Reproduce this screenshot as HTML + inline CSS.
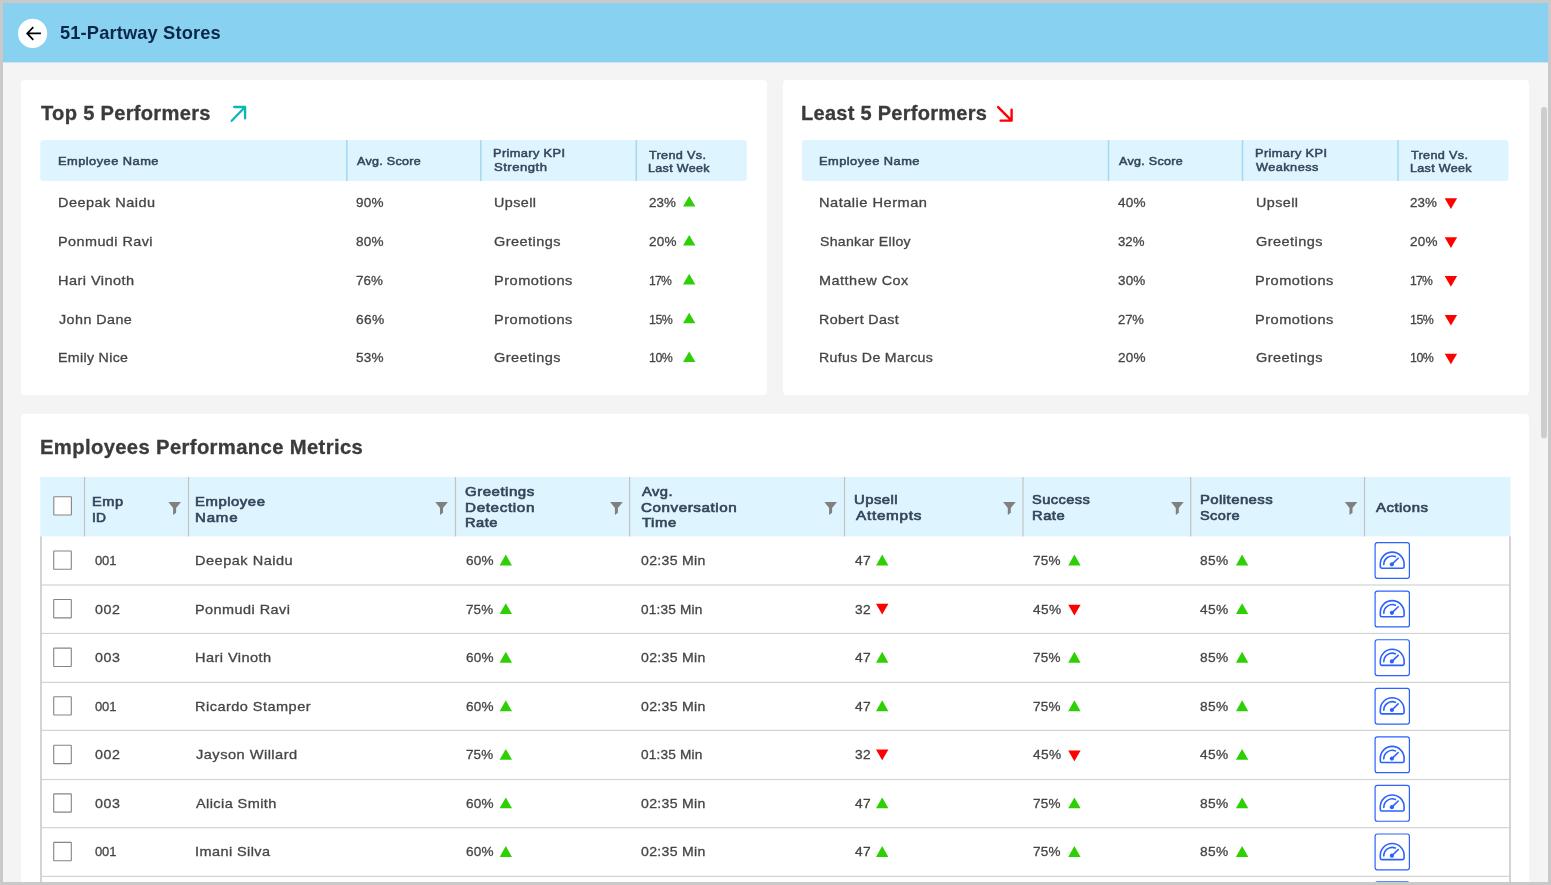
<!DOCTYPE html>
<html><head><meta charset="utf-8"><title>51-Partway Stores</title>
<style>
html,body{margin:0;padding:0}
body{width:1551px;height:885px;overflow:hidden;position:relative;background:#c9c9c9;font-family:'Liberation Sans',sans-serif}
#app{position:absolute;left:0;top:0;width:1551px;height:885px;overflow:hidden}
#clip{position:absolute;left:3px;top:3px;width:1545px;height:879px;overflow:hidden}
#inner{position:absolute;left:-3px;top:-3px;width:1551px;height:885px;will-change:transform}
.t{position:absolute;white-space:pre;line-height:20px;transform-origin:0 0}
</style></head><body>
<div id="app"><div id="clip"><div id="inner">
<svg id="shapes" width="1551" height="885" viewBox="0 0 1551 885" style="position:absolute;left:0;top:0">
<rect x="3.00" y="3.00" width="1545.00" height="879.00" fill="#f4f4f4"/>
<rect x="3.00" y="3.00" width="1545.00" height="59.40" fill="#89d1f1"/>
<circle cx="32.6" cy="33.4" r="14.6" fill="#fff"/>
<path d="M40.9 33.45H27.4M33.3 27.1L27.2 33.45L33.3 39.8" fill="none" stroke="#000" stroke-width="1.7" stroke-linejoin="miter"/>
<rect x="1541.00" y="107.00" width="6.00" height="331.40" rx="3" fill="#cdcdcd"/>
<rect x="21.00" y="80.00" width="746.00" height="315.00" rx="4" fill="#fff"/>
<rect x="783.00" y="80.00" width="746.00" height="315.00" rx="4" fill="#fff"/>
<rect x="21.00" y="414.00" width="1508.00" height="486.00" rx="4" fill="#fff"/>
<rect x="40.30" y="140.00" width="706.50" height="41.00" rx="3" fill="#def4fe"/>
<rect x="346.05" y="140.00" width="1.50" height="41.00" fill="#a6d8f3"/>
<rect x="480.05" y="140.00" width="1.50" height="41.00" fill="#a6d8f3"/>
<rect x="635.55" y="140.00" width="1.50" height="41.00" fill="#a6d8f3"/>
<polygon points="683.00,206.60 695.40,206.60 689.20,196.00" fill="#2ed005"/>
<polygon points="683.00,245.60 695.40,245.60 689.20,235.00" fill="#2ed005"/>
<polygon points="683.00,284.40 695.40,284.40 689.20,273.80" fill="#2ed005"/>
<polygon points="683.00,323.30 695.40,323.30 689.20,312.70" fill="#2ed005"/>
<polygon points="683.00,362.00 695.40,362.00 689.20,351.40" fill="#2ed005"/>
<rect x="802.00" y="140.00" width="706.50" height="41.00" rx="3" fill="#def4fe"/>
<rect x="1107.75" y="140.00" width="1.50" height="41.00" fill="#a6d8f3"/>
<rect x="1241.75" y="140.00" width="1.50" height="41.00" fill="#a6d8f3"/>
<rect x="1397.25" y="140.00" width="1.50" height="41.00" fill="#a6d8f3"/>
<polygon points="1444.70,198.30 1457.10,198.30 1450.90,208.90" fill="#ff0000"/>
<polygon points="1444.70,237.30 1457.10,237.30 1450.90,247.90" fill="#ff0000"/>
<polygon points="1444.70,276.10 1457.10,276.10 1450.90,286.70" fill="#ff0000"/>
<polygon points="1444.70,315.00 1457.10,315.00 1450.90,325.60" fill="#ff0000"/>
<polygon points="1444.70,353.70 1457.10,353.70 1450.90,364.30" fill="#ff0000"/>
<path d="M234.2 107H245.1V118.4M245.1 107L231.7 120.8" fill="none" stroke="#0bb8b4" stroke-width="2.3" stroke-linecap="round" stroke-linejoin="round"/>
<path d="M1011.6 109.6V120.6H1000.6M1011.6 120.6L998.1 107.1" fill="none" stroke="#ff0000" stroke-width="2.4" stroke-linecap="round" stroke-linejoin="round"/>
<rect x="40.30" y="477.00" width="1470.30" height="59.40" fill="#def4fe"/>
<rect x="83.90" y="477.00" width="1.20" height="59.40" fill="#c3c3c3"/>
<rect x="187.90" y="477.00" width="1.20" height="59.40" fill="#c3c3c3"/>
<rect x="454.90" y="477.00" width="1.20" height="59.40" fill="#c3c3c3"/>
<rect x="629.00" y="477.00" width="1.20" height="59.40" fill="#c3c3c3"/>
<rect x="843.90" y="477.00" width="1.20" height="59.40" fill="#c3c3c3"/>
<rect x="1022.40" y="477.00" width="1.20" height="59.40" fill="#c3c3c3"/>
<rect x="1190.10" y="477.00" width="1.20" height="59.40" fill="#c3c3c3"/>
<rect x="1363.90" y="477.00" width="1.20" height="59.40" fill="#c3c3c3"/>
<rect x="40.10" y="536.30" width="1.80" height="353.70" fill="#d0d0d0"/>
<rect x="1509.10" y="536.30" width="1.80" height="353.70" fill="#d0d0d0"/>
<rect x="53.80" y="496.80" width="17.60" height="18.20" rx="0.4" fill="#fff" stroke="#858585" stroke-width="1.1"/>
<polygon points="168.40,502.10 181.00,502.10 176.10,508.10 176.10,512.70 173.10,514.90 173.10,508.10" fill="#808080"/>
<polygon points="435.30,502.10 447.90,502.10 443.00,508.10 443.00,512.70 440.00,514.90 440.00,508.10" fill="#808080"/>
<polygon points="610.20,502.10 622.80,502.10 617.90,508.10 617.90,512.70 614.90,514.90 614.90,508.10" fill="#808080"/>
<polygon points="824.40,502.10 837.00,502.10 832.10,508.10 832.10,512.70 829.10,514.90 829.10,508.10" fill="#808080"/>
<polygon points="1003.10,502.10 1015.70,502.10 1010.80,508.10 1010.80,512.70 1007.80,514.90 1007.80,508.10" fill="#808080"/>
<polygon points="1171.10,502.10 1183.70,502.10 1178.80,508.10 1178.80,512.70 1175.80,514.90 1175.80,508.10" fill="#808080"/>
<polygon points="1344.80,502.10 1357.40,502.10 1352.50,508.10 1352.50,512.70 1349.50,514.90 1349.50,508.10" fill="#808080"/>
<rect x="41.00" y="584.40" width="1469.00" height="1.20" fill="#d3d3d3"/>
<rect x="53.70" y="551.00" width="17.60" height="18.30" rx="0.4" fill="#fff" stroke="#858585" stroke-width="1.1"/>
<polygon points="499.60,565.50 512.00,565.50 505.80,554.60" fill="#2ed005"/>
<polygon points="876.00,565.50 888.40,565.50 882.20,554.60" fill="#2ed005"/>
<polygon points="1068.20,565.50 1080.60,565.50 1074.40,554.60" fill="#2ed005"/>
<polygon points="1235.90,565.50 1248.30,565.50 1242.10,554.60" fill="#2ed005"/>
<rect x="1375.10" y="542.60" width="34.3" height="35.8" rx="2.3" fill="#fff" stroke="#2a62ff" stroke-width="1.2"/><path d="M1380.30 564.00a11.9 11.9 0 0 1 23.8 0v2.6a1.6 1.6 0 0 1 -1.6 1.6h-20.6a1.6 1.6 0 0 1 -1.6 -1.6z" fill="none" stroke="#2a62ff" stroke-width="1.6" stroke-linejoin="round"/><path d="M1383.80 564.60a8.5 8.5 0 0 1 11.6 -8.0" fill="none" stroke="#2a62ff" stroke-width="1.6" stroke-linecap="round"/><path d="M1391.90 564.30L1398.20 558.20" fill="none" stroke="#2a62ff" stroke-width="1.6" stroke-linecap="round"/><circle cx="1391.90" cy="564.30" r="2.1" fill="#2a62ff"/>
<rect x="41.00" y="632.85" width="1469.00" height="1.20" fill="#d3d3d3"/>
<rect x="53.70" y="599.57" width="17.60" height="18.30" rx="0.4" fill="#fff" stroke="#858585" stroke-width="1.1"/>
<polygon points="499.60,614.07 512.00,614.07 505.80,603.17" fill="#2ed005"/>
<polygon points="876.00,603.67 888.40,603.67 882.20,614.57" fill="#ff0000"/>
<polygon points="1068.20,604.67 1080.60,604.67 1074.40,615.57" fill="#ff0000"/>
<polygon points="1235.90,614.07 1248.30,614.07 1242.10,603.17" fill="#2ed005"/>
<rect x="1375.10" y="591.17" width="34.3" height="35.8" rx="2.3" fill="#fff" stroke="#2a62ff" stroke-width="1.2"/><path d="M1380.30 612.57a11.9 11.9 0 0 1 23.8 0v2.6a1.6 1.6 0 0 1 -1.6 1.6h-20.6a1.6 1.6 0 0 1 -1.6 -1.6z" fill="none" stroke="#2a62ff" stroke-width="1.6" stroke-linejoin="round"/><path d="M1383.80 613.17a8.5 8.5 0 0 1 11.6 -8.0" fill="none" stroke="#2a62ff" stroke-width="1.6" stroke-linecap="round"/><path d="M1391.90 612.87L1398.20 606.77" fill="none" stroke="#2a62ff" stroke-width="1.6" stroke-linecap="round"/><circle cx="1391.90" cy="612.87" r="2.1" fill="#2a62ff"/>
<rect x="41.00" y="681.80" width="1469.00" height="1.20" fill="#d3d3d3"/>
<rect x="53.70" y="648.14" width="17.60" height="18.30" rx="0.4" fill="#fff" stroke="#858585" stroke-width="1.1"/>
<polygon points="499.60,662.64 512.00,662.64 505.80,651.74" fill="#2ed005"/>
<polygon points="876.00,662.64 888.40,662.64 882.20,651.74" fill="#2ed005"/>
<polygon points="1068.20,662.64 1080.60,662.64 1074.40,651.74" fill="#2ed005"/>
<polygon points="1235.90,662.64 1248.30,662.64 1242.10,651.74" fill="#2ed005"/>
<rect x="1375.10" y="639.74" width="34.3" height="35.8" rx="2.3" fill="#fff" stroke="#2a62ff" stroke-width="1.2"/><path d="M1380.30 661.14a11.9 11.9 0 0 1 23.8 0v2.6a1.6 1.6 0 0 1 -1.6 1.6h-20.6a1.6 1.6 0 0 1 -1.6 -1.6z" fill="none" stroke="#2a62ff" stroke-width="1.6" stroke-linejoin="round"/><path d="M1383.80 661.74a8.5 8.5 0 0 1 11.6 -8.0" fill="none" stroke="#2a62ff" stroke-width="1.6" stroke-linecap="round"/><path d="M1391.90 661.44L1398.20 655.34" fill="none" stroke="#2a62ff" stroke-width="1.6" stroke-linecap="round"/><circle cx="1391.90" cy="661.44" r="2.1" fill="#2a62ff"/>
<rect x="41.00" y="729.80" width="1469.00" height="1.20" fill="#d3d3d3"/>
<rect x="53.70" y="696.71" width="17.60" height="18.30" rx="0.4" fill="#fff" stroke="#858585" stroke-width="1.1"/>
<polygon points="499.60,711.21 512.00,711.21 505.80,700.31" fill="#2ed005"/>
<polygon points="876.00,711.21 888.40,711.21 882.20,700.31" fill="#2ed005"/>
<polygon points="1068.20,711.21 1080.60,711.21 1074.40,700.31" fill="#2ed005"/>
<polygon points="1235.90,711.21 1248.30,711.21 1242.10,700.31" fill="#2ed005"/>
<rect x="1375.10" y="688.31" width="34.3" height="35.8" rx="2.3" fill="#fff" stroke="#2a62ff" stroke-width="1.2"/><path d="M1380.30 709.71a11.9 11.9 0 0 1 23.8 0v2.6a1.6 1.6 0 0 1 -1.6 1.6h-20.6a1.6 1.6 0 0 1 -1.6 -1.6z" fill="none" stroke="#2a62ff" stroke-width="1.6" stroke-linejoin="round"/><path d="M1383.80 710.31a8.5 8.5 0 0 1 11.6 -8.0" fill="none" stroke="#2a62ff" stroke-width="1.6" stroke-linecap="round"/><path d="M1391.90 710.01L1398.20 703.91" fill="none" stroke="#2a62ff" stroke-width="1.6" stroke-linecap="round"/><circle cx="1391.90" cy="710.01" r="2.1" fill="#2a62ff"/>
<rect x="41.00" y="778.90" width="1469.00" height="1.20" fill="#d3d3d3"/>
<rect x="53.70" y="745.28" width="17.60" height="18.30" rx="0.4" fill="#fff" stroke="#858585" stroke-width="1.1"/>
<polygon points="499.60,759.78 512.00,759.78 505.80,748.88" fill="#2ed005"/>
<polygon points="876.00,749.38 888.40,749.38 882.20,760.28" fill="#ff0000"/>
<polygon points="1068.20,750.38 1080.60,750.38 1074.40,761.28" fill="#ff0000"/>
<polygon points="1235.90,759.78 1248.30,759.78 1242.10,748.88" fill="#2ed005"/>
<rect x="1375.10" y="736.88" width="34.3" height="35.8" rx="2.3" fill="#fff" stroke="#2a62ff" stroke-width="1.2"/><path d="M1380.30 758.28a11.9 11.9 0 0 1 23.8 0v2.6a1.6 1.6 0 0 1 -1.6 1.6h-20.6a1.6 1.6 0 0 1 -1.6 -1.6z" fill="none" stroke="#2a62ff" stroke-width="1.6" stroke-linejoin="round"/><path d="M1383.80 758.88a8.5 8.5 0 0 1 11.6 -8.0" fill="none" stroke="#2a62ff" stroke-width="1.6" stroke-linecap="round"/><path d="M1391.90 758.58L1398.20 752.48" fill="none" stroke="#2a62ff" stroke-width="1.6" stroke-linecap="round"/><circle cx="1391.90" cy="758.58" r="2.1" fill="#2a62ff"/>
<rect x="41.00" y="827.05" width="1469.00" height="1.20" fill="#d3d3d3"/>
<rect x="53.70" y="793.85" width="17.60" height="18.30" rx="0.4" fill="#fff" stroke="#858585" stroke-width="1.1"/>
<polygon points="499.60,808.35 512.00,808.35 505.80,797.45" fill="#2ed005"/>
<polygon points="876.00,808.35 888.40,808.35 882.20,797.45" fill="#2ed005"/>
<polygon points="1068.20,808.35 1080.60,808.35 1074.40,797.45" fill="#2ed005"/>
<polygon points="1235.90,808.35 1248.30,808.35 1242.10,797.45" fill="#2ed005"/>
<rect x="1375.10" y="785.45" width="34.3" height="35.8" rx="2.3" fill="#fff" stroke="#2a62ff" stroke-width="1.2"/><path d="M1380.30 806.85a11.9 11.9 0 0 1 23.8 0v2.6a1.6 1.6 0 0 1 -1.6 1.6h-20.6a1.6 1.6 0 0 1 -1.6 -1.6z" fill="none" stroke="#2a62ff" stroke-width="1.6" stroke-linejoin="round"/><path d="M1383.80 807.45a8.5 8.5 0 0 1 11.6 -8.0" fill="none" stroke="#2a62ff" stroke-width="1.6" stroke-linecap="round"/><path d="M1391.90 807.15L1398.20 801.05" fill="none" stroke="#2a62ff" stroke-width="1.6" stroke-linecap="round"/><circle cx="1391.90" cy="807.15" r="2.1" fill="#2a62ff"/>
<rect x="41.00" y="875.80" width="1469.00" height="1.20" fill="#d3d3d3"/>
<rect x="53.70" y="842.42" width="17.60" height="18.30" rx="0.4" fill="#fff" stroke="#858585" stroke-width="1.1"/>
<polygon points="499.60,856.92 512.00,856.92 505.80,846.02" fill="#2ed005"/>
<polygon points="876.00,856.92 888.40,856.92 882.20,846.02" fill="#2ed005"/>
<polygon points="1068.20,856.92 1080.60,856.92 1074.40,846.02" fill="#2ed005"/>
<polygon points="1235.90,856.92 1248.30,856.92 1242.10,846.02" fill="#2ed005"/>
<rect x="1375.10" y="834.02" width="34.3" height="35.8" rx="2.3" fill="#fff" stroke="#2a62ff" stroke-width="1.2"/><path d="M1380.30 855.42a11.9 11.9 0 0 1 23.8 0v2.6a1.6 1.6 0 0 1 -1.6 1.6h-20.6a1.6 1.6 0 0 1 -1.6 -1.6z" fill="none" stroke="#2a62ff" stroke-width="1.6" stroke-linejoin="round"/><path d="M1383.80 856.02a8.5 8.5 0 0 1 11.6 -8.0" fill="none" stroke="#2a62ff" stroke-width="1.6" stroke-linecap="round"/><path d="M1391.90 855.72L1398.20 849.62" fill="none" stroke="#2a62ff" stroke-width="1.6" stroke-linecap="round"/><circle cx="1391.90" cy="855.72" r="2.1" fill="#2a62ff"/>
<rect x="41.00" y="924.40" width="1469.00" height="1.20" fill="#d3d3d3"/>
<rect x="53.70" y="890.99" width="17.60" height="18.30" rx="0.4" fill="#fff" stroke="#858585" stroke-width="1.1"/>
<polygon points="499.60,905.49 512.00,905.49 505.80,894.59" fill="#2ed005"/>
<polygon points="876.00,895.09 888.40,895.09 882.20,905.99" fill="#ff0000"/>
<polygon points="1068.20,896.09 1080.60,896.09 1074.40,906.99" fill="#ff0000"/>
<polygon points="1235.90,905.49 1248.30,905.49 1242.10,894.59" fill="#2ed005"/>
<rect x="1375.10" y="881.89" width="34.3" height="35.8" rx="2.3" fill="#fff" stroke="#2a62ff" stroke-width="1.2"/><path d="M1380.30 903.29a11.9 11.9 0 0 1 23.8 0v2.6a1.6 1.6 0 0 1 -1.6 1.6h-20.6a1.6 1.6 0 0 1 -1.6 -1.6z" fill="none" stroke="#2a62ff" stroke-width="1.6" stroke-linejoin="round"/><path d="M1383.80 903.89a8.5 8.5 0 0 1 11.6 -8.0" fill="none" stroke="#2a62ff" stroke-width="1.6" stroke-linecap="round"/><path d="M1391.90 903.59L1398.20 897.49" fill="none" stroke="#2a62ff" stroke-width="1.6" stroke-linecap="round"/><circle cx="1391.90" cy="903.59" r="2.1" fill="#2a62ff"/>
</svg>
<div class="t" style="left:59.59px;top:23.40px;font-size:17.9px;font-weight:700;color:#0a2748;letter-spacing:0.135px;transform:scaleX(1.0214)">51-Partway Stores</div>
<div class="t" style="left:40.80px;top:103.60px;font-size:19.3px;font-weight:700;color:#3b3b3b;letter-spacing:0.286px;transform:scaleX(1.0427);-webkit-text-stroke:0.3px">Top 5 Performers</div>
<div class="t" style="left:57.58px;top:151.40px;font-size:11.7px;font-weight:400;color:#33455b;letter-spacing:0.425px;transform:scaleX(1.0982);-webkit-text-stroke:0.5px">Employee Name</div>
<div class="t" style="left:356.87px;top:151.40px;font-size:11.7px;font-weight:400;color:#33455b;letter-spacing:0.282px;transform:scaleX(1.0716);-webkit-text-stroke:0.5px">Avg. Score</div>
<div class="t" style="left:492.98px;top:143.40px;font-size:11.7px;font-weight:400;color:#33455b;letter-spacing:0.346px;transform:scaleX(1.0933);-webkit-text-stroke:0.5px">Primary KPI</div>
<div class="t" style="left:493.52px;top:156.90px;font-size:11.7px;font-weight:400;color:#33455b;letter-spacing:0.444px;transform:scaleX(1.1200);-webkit-text-stroke:0.5px">Strength</div>
<div class="t" style="left:649.10px;top:144.80px;font-size:11.7px;font-weight:400;color:#33455b;letter-spacing:0.306px;transform:scaleX(1.0800);-webkit-text-stroke:0.5px">Trend Vs.</div>
<div class="t" style="left:648.30px;top:158.40px;font-size:11.7px;font-weight:400;color:#33455b;letter-spacing:0.306px;transform:scaleX(1.0718);-webkit-text-stroke:0.5px">Last Week</div>
<div class="t" style="left:57.50px;top:193.00px;font-size:13.2px;font-weight:400;color:#454545;letter-spacing:0.439px;transform:scaleX(1.0972);-webkit-text-stroke:0.3px">Deepak Naidu</div>
<div class="t" style="left:355.99px;top:193.00px;font-size:13.2px;font-weight:400;color:#454545;letter-spacing:0.214px;transform:scaleX(1.0259);-webkit-text-stroke:0.3px">90%</div>
<div class="t" style="left:494.08px;top:193.00px;font-size:13.2px;font-weight:400;color:#454545;letter-spacing:0.379px;transform:scaleX(1.0877);-webkit-text-stroke:0.3px">Upsell</div>
<div class="t" style="left:648.69px;top:193.00px;font-size:13.2px;font-weight:400;color:#454545;letter-spacing:0.118px;transform:scaleX(1.0141);-webkit-text-stroke:0.3px">23%</div>
<div class="t" style="left:57.51px;top:232.00px;font-size:13.2px;font-weight:400;color:#454545;letter-spacing:0.410px;transform:scaleX(1.0917);-webkit-text-stroke:0.3px">Ponmudi Ravi</div>
<div class="t" style="left:355.99px;top:232.00px;font-size:13.2px;font-weight:400;color:#454545;letter-spacing:0.214px;transform:scaleX(1.0259);-webkit-text-stroke:0.3px">80%</div>
<div class="t" style="left:494.35px;top:232.00px;font-size:13.2px;font-weight:400;color:#454545;letter-spacing:0.421px;transform:scaleX(1.0987);-webkit-text-stroke:0.3px">Greetings</div>
<div class="t" style="left:648.69px;top:232.00px;font-size:13.2px;font-weight:400;color:#454545;letter-spacing:0.195px;transform:scaleX(1.0235);-webkit-text-stroke:0.3px">20%</div>
<div class="t" style="left:57.50px;top:270.80px;font-size:13.2px;font-weight:400;color:#454545;letter-spacing:0.393px;transform:scaleX(1.1029);-webkit-text-stroke:0.3px">Hari Vinoth</div>
<div class="t" style="left:355.99px;top:270.80px;font-size:13.2px;font-weight:400;color:#454545;letter-spacing:0.099px;transform:scaleX(1.0118);-webkit-text-stroke:0.3px">76%</div>
<div class="t" style="left:493.79px;top:270.80px;font-size:13.2px;font-weight:400;color:#454545;letter-spacing:0.462px;transform:scaleX(1.1053);-webkit-text-stroke:0.3px">Promotions</div>
<div class="t" style="left:648.51px;top:270.80px;font-size:13.2px;font-weight:400;color:#454545;letter-spacing:-0.832px;transform:scaleX(0.9200);-webkit-text-stroke:0.3px">17%</div>
<div class="t" style="left:58.60px;top:309.70px;font-size:13.2px;font-weight:400;color:#454545;letter-spacing:0.412px;transform:scaleX(1.0849);-webkit-text-stroke:0.3px">John Dane</div>
<div class="t" style="left:355.98px;top:309.70px;font-size:13.2px;font-weight:400;color:#454545;letter-spacing:0.364px;transform:scaleX(1.0447);-webkit-text-stroke:0.3px">66%</div>
<div class="t" style="left:493.79px;top:309.70px;font-size:13.2px;font-weight:400;color:#454545;letter-spacing:0.462px;transform:scaleX(1.1053);-webkit-text-stroke:0.3px">Promotions</div>
<div class="t" style="left:648.50px;top:309.70px;font-size:13.2px;font-weight:400;color:#454545;letter-spacing:-0.543px;transform:scaleX(0.9394);-webkit-text-stroke:0.3px">15%</div>
<div class="t" style="left:57.53px;top:348.40px;font-size:13.2px;font-weight:400;color:#454545;letter-spacing:0.312px;transform:scaleX(1.0746);-webkit-text-stroke:0.3px">Emily Nice</div>
<div class="t" style="left:355.99px;top:348.40px;font-size:13.2px;font-weight:400;color:#454545;letter-spacing:0.233px;transform:scaleX(1.0282);-webkit-text-stroke:0.3px">53%</div>
<div class="t" style="left:494.35px;top:348.40px;font-size:13.2px;font-weight:400;color:#454545;letter-spacing:0.421px;transform:scaleX(1.0987);-webkit-text-stroke:0.3px">Greetings</div>
<div class="t" style="left:648.50px;top:348.40px;font-size:13.2px;font-weight:400;color:#454545;letter-spacing:-0.543px;transform:scaleX(0.9394);-webkit-text-stroke:0.3px">10%</div>
<div class="t" style="left:801.46px;top:103.60px;font-size:19.3px;font-weight:700;color:#3b3b3b;letter-spacing:0.251px;transform:scaleX(1.0385);-webkit-text-stroke:0.3px">Least 5 Performers</div>
<div class="t" style="left:819.28px;top:151.40px;font-size:11.7px;font-weight:400;color:#33455b;letter-spacing:0.425px;transform:scaleX(1.0982);-webkit-text-stroke:0.5px">Employee Name</div>
<div class="t" style="left:1118.57px;top:151.40px;font-size:11.7px;font-weight:400;color:#33455b;letter-spacing:0.282px;transform:scaleX(1.0716);-webkit-text-stroke:0.5px">Avg. Score</div>
<div class="t" style="left:1254.68px;top:143.40px;font-size:11.7px;font-weight:400;color:#33455b;letter-spacing:0.346px;transform:scaleX(1.0933);-webkit-text-stroke:0.5px">Primary KPI</div>
<div class="t" style="left:1255.77px;top:156.90px;font-size:11.7px;font-weight:400;color:#33455b;letter-spacing:0.420px;transform:scaleX(1.0881);-webkit-text-stroke:0.5px">Weakness</div>
<div class="t" style="left:1410.80px;top:144.80px;font-size:11.7px;font-weight:400;color:#33455b;letter-spacing:0.306px;transform:scaleX(1.0800);-webkit-text-stroke:0.5px">Trend Vs.</div>
<div class="t" style="left:1410.00px;top:158.40px;font-size:11.7px;font-weight:400;color:#33455b;letter-spacing:0.306px;transform:scaleX(1.0718);-webkit-text-stroke:0.5px">Last Week</div>
<div class="t" style="left:819.19px;top:193.00px;font-size:13.2px;font-weight:400;color:#454545;letter-spacing:0.450px;transform:scaleX(1.1080);-webkit-text-stroke:0.3px">Natalie Herman</div>
<div class="t" style="left:1117.94px;top:193.00px;font-size:13.2px;font-weight:400;color:#454545;letter-spacing:0.243px;transform:scaleX(1.0291);-webkit-text-stroke:0.3px">40%</div>
<div class="t" style="left:1255.78px;top:193.00px;font-size:13.2px;font-weight:400;color:#454545;letter-spacing:0.379px;transform:scaleX(1.0877);-webkit-text-stroke:0.3px">Upsell</div>
<div class="t" style="left:1410.39px;top:193.00px;font-size:13.2px;font-weight:400;color:#454545;letter-spacing:0.118px;transform:scaleX(1.0141);-webkit-text-stroke:0.3px">23%</div>
<div class="t" style="left:819.77px;top:232.00px;font-size:13.2px;font-weight:400;color:#454545;letter-spacing:0.287px;transform:scaleX(1.0681);-webkit-text-stroke:0.3px">Shankar Elloy</div>
<div class="t" style="left:1117.95px;top:232.00px;font-size:13.2px;font-weight:400;color:#454545;letter-spacing:0.010px;transform:scaleX(1.0012);-webkit-text-stroke:0.3px">32%</div>
<div class="t" style="left:1256.05px;top:232.00px;font-size:13.2px;font-weight:400;color:#454545;letter-spacing:0.421px;transform:scaleX(1.0987);-webkit-text-stroke:0.3px">Greetings</div>
<div class="t" style="left:1410.39px;top:232.00px;font-size:13.2px;font-weight:400;color:#454545;letter-spacing:0.195px;transform:scaleX(1.0235);-webkit-text-stroke:0.3px">20%</div>
<div class="t" style="left:819.20px;top:270.80px;font-size:13.2px;font-weight:400;color:#454545;letter-spacing:0.448px;transform:scaleX(1.0971);-webkit-text-stroke:0.3px">Matthew Cox</div>
<div class="t" style="left:1117.94px;top:270.80px;font-size:13.2px;font-weight:400;color:#454545;letter-spacing:0.186px;transform:scaleX(1.0221);-webkit-text-stroke:0.3px">30%</div>
<div class="t" style="left:1255.49px;top:270.80px;font-size:13.2px;font-weight:400;color:#454545;letter-spacing:0.462px;transform:scaleX(1.1053);-webkit-text-stroke:0.3px">Promotions</div>
<div class="t" style="left:1410.21px;top:270.80px;font-size:13.2px;font-weight:400;color:#454545;letter-spacing:-0.832px;transform:scaleX(0.9200);-webkit-text-stroke:0.3px">17%</div>
<div class="t" style="left:819.22px;top:309.70px;font-size:13.2px;font-weight:400;color:#454545;letter-spacing:0.344px;transform:scaleX(1.0803);-webkit-text-stroke:0.3px">Robert Dast</div>
<div class="t" style="left:1117.71px;top:309.70px;font-size:13.2px;font-weight:400;color:#454545;letter-spacing:-0.101px;transform:scaleX(0.9882);-webkit-text-stroke:0.3px">27%</div>
<div class="t" style="left:1255.49px;top:309.70px;font-size:13.2px;font-weight:400;color:#454545;letter-spacing:0.462px;transform:scaleX(1.1053);-webkit-text-stroke:0.3px">Promotions</div>
<div class="t" style="left:1410.20px;top:309.70px;font-size:13.2px;font-weight:400;color:#454545;letter-spacing:-0.543px;transform:scaleX(0.9394);-webkit-text-stroke:0.3px">15%</div>
<div class="t" style="left:819.23px;top:348.40px;font-size:13.2px;font-weight:400;color:#454545;letter-spacing:0.317px;transform:scaleX(1.0710);-webkit-text-stroke:0.3px">Rufus De Marcus</div>
<div class="t" style="left:1117.69px;top:348.40px;font-size:13.2px;font-weight:400;color:#454545;letter-spacing:0.233px;transform:scaleX(1.0282);-webkit-text-stroke:0.3px">20%</div>
<div class="t" style="left:1256.05px;top:348.40px;font-size:13.2px;font-weight:400;color:#454545;letter-spacing:0.421px;transform:scaleX(1.0987);-webkit-text-stroke:0.3px">Greetings</div>
<div class="t" style="left:1410.20px;top:348.40px;font-size:13.2px;font-weight:400;color:#454545;letter-spacing:-0.543px;transform:scaleX(0.9394);-webkit-text-stroke:0.3px">10%</div>
<div class="t" style="left:40.25px;top:437.90px;font-size:19.3px;font-weight:700;color:#3b3b3b;letter-spacing:0.337px;transform:scaleX(1.0501);-webkit-text-stroke:0.3px">Employees Performance Metrics</div>
<div class="t" style="left:91.90px;top:491.90px;font-size:13.6px;font-weight:400;color:#33455b;letter-spacing:0.580px;transform:scaleX(1.0689);-webkit-text-stroke:0.65px">Emp</div>
<div class="t" style="left:91.69px;top:507.50px;font-size:13.6px;font-weight:400;color:#33455b;letter-spacing:0.099px;transform:scaleX(1.0122);-webkit-text-stroke:0.65px">ID</div>
<div class="t" style="left:195.38px;top:492.00px;font-size:13.6px;font-weight:400;color:#33455b;letter-spacing:0.491px;transform:scaleX(1.0948);-webkit-text-stroke:0.65px">Employee</div>
<div class="t" style="left:195.37px;top:507.50px;font-size:13.6px;font-weight:400;color:#33455b;letter-spacing:0.742px;transform:scaleX(1.1047);-webkit-text-stroke:0.65px">Name</div>
<div class="t" style="left:465.42px;top:482.10px;font-size:13.6px;font-weight:400;color:#33455b;letter-spacing:0.462px;transform:scaleX(1.1046);-webkit-text-stroke:0.65px">Greetings</div>
<div class="t" style="left:464.86px;top:497.60px;font-size:13.6px;font-weight:400;color:#33455b;letter-spacing:0.569px;transform:scaleX(1.1200);-webkit-text-stroke:0.65px">Detection</div>
<div class="t" style="left:464.89px;top:513.10px;font-size:13.6px;font-weight:400;color:#33455b;letter-spacing:0.462px;transform:scaleX(1.0811);-webkit-text-stroke:0.65px">Rate</div>
<div class="t" style="left:642.24px;top:482.10px;font-size:13.6px;font-weight:400;color:#33455b;letter-spacing:0.432px;transform:scaleX(1.0792);-webkit-text-stroke:0.65px">Avg.</div>
<div class="t" style="left:641.42px;top:497.60px;font-size:13.6px;font-weight:400;color:#33455b;letter-spacing:0.506px;transform:scaleX(1.1177);-webkit-text-stroke:0.65px">Conversation</div>
<div class="t" style="left:641.70px;top:513.10px;font-size:13.6px;font-weight:400;color:#33455b;letter-spacing:0.538px;transform:scaleX(1.0895);-webkit-text-stroke:0.65px">Time</div>
<div class="t" style="left:854.28px;top:490.20px;font-size:13.6px;font-weight:400;color:#33455b;letter-spacing:0.417px;transform:scaleX(1.0937);-webkit-text-stroke:0.65px">Upsell</div>
<div class="t" style="left:855.66px;top:505.70px;font-size:13.6px;font-weight:400;color:#33455b;letter-spacing:0.679px;transform:scaleX(1.1200);-webkit-text-stroke:0.65px">Attempts</div>
<div class="t" style="left:1032.33px;top:490.20px;font-size:13.6px;font-weight:400;color:#33455b;letter-spacing:0.391px;transform:scaleX(1.0741);-webkit-text-stroke:0.65px">Success</div>
<div class="t" style="left:1031.79px;top:505.70px;font-size:13.6px;font-weight:400;color:#33455b;letter-spacing:0.474px;transform:scaleX(1.0832);-webkit-text-stroke:0.65px">Rate</div>
<div class="t" style="left:1199.68px;top:490.20px;font-size:13.6px;font-weight:400;color:#33455b;letter-spacing:0.400px;transform:scaleX(1.0957);-webkit-text-stroke:0.65px">Politeness</div>
<div class="t" style="left:1200.23px;top:505.70px;font-size:13.6px;font-weight:400;color:#33455b;letter-spacing:0.383px;transform:scaleX(1.0703);-webkit-text-stroke:0.65px">Score</div>
<div class="t" style="left:1375.75px;top:497.60px;font-size:13.6px;font-weight:400;color:#33455b;letter-spacing:0.449px;transform:scaleX(1.0987);-webkit-text-stroke:0.65px">Actions</div>
<div class="t" style="left:95.35px;top:551.00px;font-size:13.2px;font-weight:400;color:#454545;letter-spacing:-0.112px;transform:scaleX(0.9845);-webkit-text-stroke:0.3px">001</div>
<div class="t" style="left:195.10px;top:551.00px;font-size:13.2px;font-weight:400;color:#454545;letter-spacing:0.457px;transform:scaleX(1.1017);-webkit-text-stroke:0.3px">Deepak Naidu</div>
<div class="t" style="left:465.59px;top:551.00px;font-size:13.2px;font-weight:400;color:#454545;letter-spacing:0.233px;transform:scaleX(1.0282);-webkit-text-stroke:0.3px">60%</div>
<div class="t" style="left:641.43px;top:551.00px;font-size:13.2px;font-weight:400;color:#454545;letter-spacing:0.295px;transform:scaleX(1.0663);-webkit-text-stroke:0.3px">02:35 Min</div>
<div class="t" style="left:854.84px;top:551.00px;font-size:13.2px;font-weight:400;color:#454545;letter-spacing:0.420px;transform:scaleX(1.0471);-webkit-text-stroke:0.3px">47</div>
<div class="t" style="left:1032.79px;top:551.00px;font-size:13.2px;font-weight:400;color:#454545;letter-spacing:0.195px;transform:scaleX(1.0235);-webkit-text-stroke:0.3px">75%</div>
<div class="t" style="left:1199.88px;top:551.00px;font-size:13.2px;font-weight:400;color:#454545;letter-spacing:0.327px;transform:scaleX(1.0400);-webkit-text-stroke:0.3px">85%</div>
<div class="t" style="left:95.33px;top:599.57px;font-size:13.2px;font-weight:400;color:#454545;letter-spacing:0.545px;transform:scaleX(1.0833);-webkit-text-stroke:0.3px">002</div>
<div class="t" style="left:195.11px;top:599.57px;font-size:13.2px;font-weight:400;color:#454545;letter-spacing:0.422px;transform:scaleX(1.0947);-webkit-text-stroke:0.3px">Ponmudi Ravi</div>
<div class="t" style="left:465.59px;top:599.57px;font-size:13.2px;font-weight:400;color:#454545;letter-spacing:0.138px;transform:scaleX(1.0165);-webkit-text-stroke:0.3px">75%</div>
<div class="t" style="left:641.44px;top:599.57px;font-size:13.2px;font-weight:400;color:#454545;letter-spacing:0.159px;transform:scaleX(1.0347);-webkit-text-stroke:0.3px">01:35 Min</div>
<div class="t" style="left:854.84px;top:599.57px;font-size:13.2px;font-weight:400;color:#454545;letter-spacing:0.384px;transform:scaleX(1.0429);-webkit-text-stroke:0.3px">32</div>
<div class="t" style="left:1033.04px;top:599.57px;font-size:13.2px;font-weight:400;color:#454545;letter-spacing:0.318px;transform:scaleX(1.0384);-webkit-text-stroke:0.3px">45%</div>
<div class="t" style="left:1200.14px;top:599.57px;font-size:13.2px;font-weight:400;color:#454545;letter-spacing:0.336px;transform:scaleX(1.0408);-webkit-text-stroke:0.3px">45%</div>
<div class="t" style="left:95.33px;top:648.14px;font-size:13.2px;font-weight:400;color:#454545;letter-spacing:0.545px;transform:scaleX(1.0833);-webkit-text-stroke:0.3px">003</div>
<div class="t" style="left:195.10px;top:648.14px;font-size:13.2px;font-weight:400;color:#454545;letter-spacing:0.397px;transform:scaleX(1.1039);-webkit-text-stroke:0.3px">Hari Vinoth</div>
<div class="t" style="left:465.59px;top:648.14px;font-size:13.2px;font-weight:400;color:#454545;letter-spacing:0.233px;transform:scaleX(1.0282);-webkit-text-stroke:0.3px">60%</div>
<div class="t" style="left:641.43px;top:648.14px;font-size:13.2px;font-weight:400;color:#454545;letter-spacing:0.295px;transform:scaleX(1.0663);-webkit-text-stroke:0.3px">02:35 Min</div>
<div class="t" style="left:854.84px;top:648.14px;font-size:13.2px;font-weight:400;color:#454545;letter-spacing:0.420px;transform:scaleX(1.0471);-webkit-text-stroke:0.3px">47</div>
<div class="t" style="left:1032.79px;top:648.14px;font-size:13.2px;font-weight:400;color:#454545;letter-spacing:0.195px;transform:scaleX(1.0235);-webkit-text-stroke:0.3px">75%</div>
<div class="t" style="left:1199.88px;top:648.14px;font-size:13.2px;font-weight:400;color:#454545;letter-spacing:0.327px;transform:scaleX(1.0400);-webkit-text-stroke:0.3px">85%</div>
<div class="t" style="left:95.35px;top:696.71px;font-size:13.2px;font-weight:400;color:#454545;letter-spacing:-0.112px;transform:scaleX(0.9845);-webkit-text-stroke:0.3px">001</div>
<div class="t" style="left:195.10px;top:696.71px;font-size:13.2px;font-weight:400;color:#454545;letter-spacing:0.428px;transform:scaleX(1.1010);-webkit-text-stroke:0.3px">Ricardo Stamper</div>
<div class="t" style="left:465.59px;top:696.71px;font-size:13.2px;font-weight:400;color:#454545;letter-spacing:0.233px;transform:scaleX(1.0282);-webkit-text-stroke:0.3px">60%</div>
<div class="t" style="left:641.43px;top:696.71px;font-size:13.2px;font-weight:400;color:#454545;letter-spacing:0.295px;transform:scaleX(1.0663);-webkit-text-stroke:0.3px">02:35 Min</div>
<div class="t" style="left:854.84px;top:696.71px;font-size:13.2px;font-weight:400;color:#454545;letter-spacing:0.420px;transform:scaleX(1.0471);-webkit-text-stroke:0.3px">47</div>
<div class="t" style="left:1032.79px;top:696.71px;font-size:13.2px;font-weight:400;color:#454545;letter-spacing:0.195px;transform:scaleX(1.0235);-webkit-text-stroke:0.3px">75%</div>
<div class="t" style="left:1199.88px;top:696.71px;font-size:13.2px;font-weight:400;color:#454545;letter-spacing:0.327px;transform:scaleX(1.0400);-webkit-text-stroke:0.3px">85%</div>
<div class="t" style="left:95.33px;top:745.28px;font-size:13.2px;font-weight:400;color:#454545;letter-spacing:0.545px;transform:scaleX(1.0833);-webkit-text-stroke:0.3px">002</div>
<div class="t" style="left:195.60px;top:745.28px;font-size:13.2px;font-weight:400;color:#454545;letter-spacing:0.425px;transform:scaleX(1.1080);-webkit-text-stroke:0.3px">Jayson Willard</div>
<div class="t" style="left:465.59px;top:745.28px;font-size:13.2px;font-weight:400;color:#454545;letter-spacing:0.138px;transform:scaleX(1.0165);-webkit-text-stroke:0.3px">75%</div>
<div class="t" style="left:641.44px;top:745.28px;font-size:13.2px;font-weight:400;color:#454545;letter-spacing:0.159px;transform:scaleX(1.0347);-webkit-text-stroke:0.3px">01:35 Min</div>
<div class="t" style="left:854.84px;top:745.28px;font-size:13.2px;font-weight:400;color:#454545;letter-spacing:0.384px;transform:scaleX(1.0429);-webkit-text-stroke:0.3px">32</div>
<div class="t" style="left:1033.04px;top:745.28px;font-size:13.2px;font-weight:400;color:#454545;letter-spacing:0.318px;transform:scaleX(1.0384);-webkit-text-stroke:0.3px">45%</div>
<div class="t" style="left:1200.14px;top:745.28px;font-size:13.2px;font-weight:400;color:#454545;letter-spacing:0.336px;transform:scaleX(1.0408);-webkit-text-stroke:0.3px">45%</div>
<div class="t" style="left:95.33px;top:793.85px;font-size:13.2px;font-weight:400;color:#454545;letter-spacing:0.545px;transform:scaleX(1.0833);-webkit-text-stroke:0.3px">003</div>
<div class="t" style="left:196.20px;top:793.85px;font-size:13.2px;font-weight:400;color:#454545;letter-spacing:0.375px;transform:scaleX(1.0998);-webkit-text-stroke:0.3px">Alicia Smith</div>
<div class="t" style="left:465.59px;top:793.85px;font-size:13.2px;font-weight:400;color:#454545;letter-spacing:0.233px;transform:scaleX(1.0282);-webkit-text-stroke:0.3px">60%</div>
<div class="t" style="left:641.43px;top:793.85px;font-size:13.2px;font-weight:400;color:#454545;letter-spacing:0.295px;transform:scaleX(1.0663);-webkit-text-stroke:0.3px">02:35 Min</div>
<div class="t" style="left:854.84px;top:793.85px;font-size:13.2px;font-weight:400;color:#454545;letter-spacing:0.420px;transform:scaleX(1.0471);-webkit-text-stroke:0.3px">47</div>
<div class="t" style="left:1032.79px;top:793.85px;font-size:13.2px;font-weight:400;color:#454545;letter-spacing:0.195px;transform:scaleX(1.0235);-webkit-text-stroke:0.3px">75%</div>
<div class="t" style="left:1199.88px;top:793.85px;font-size:13.2px;font-weight:400;color:#454545;letter-spacing:0.327px;transform:scaleX(1.0400);-webkit-text-stroke:0.3px">85%</div>
<div class="t" style="left:95.35px;top:842.42px;font-size:13.2px;font-weight:400;color:#454545;letter-spacing:-0.112px;transform:scaleX(0.9845);-webkit-text-stroke:0.3px">001</div>
<div class="t" style="left:195.10px;top:842.42px;font-size:13.2px;font-weight:400;color:#454545;letter-spacing:0.381px;transform:scaleX(1.0984);-webkit-text-stroke:0.3px">Imani Silva</div>
<div class="t" style="left:465.59px;top:842.42px;font-size:13.2px;font-weight:400;color:#454545;letter-spacing:0.233px;transform:scaleX(1.0282);-webkit-text-stroke:0.3px">60%</div>
<div class="t" style="left:641.43px;top:842.42px;font-size:13.2px;font-weight:400;color:#454545;letter-spacing:0.295px;transform:scaleX(1.0663);-webkit-text-stroke:0.3px">02:35 Min</div>
<div class="t" style="left:854.84px;top:842.42px;font-size:13.2px;font-weight:400;color:#454545;letter-spacing:0.420px;transform:scaleX(1.0471);-webkit-text-stroke:0.3px">47</div>
<div class="t" style="left:1032.79px;top:842.42px;font-size:13.2px;font-weight:400;color:#454545;letter-spacing:0.195px;transform:scaleX(1.0235);-webkit-text-stroke:0.3px">75%</div>
<div class="t" style="left:1199.88px;top:842.42px;font-size:13.2px;font-weight:400;color:#454545;letter-spacing:0.327px;transform:scaleX(1.0400);-webkit-text-stroke:0.3px">85%</div>
</div></div></div>
</body></html>
